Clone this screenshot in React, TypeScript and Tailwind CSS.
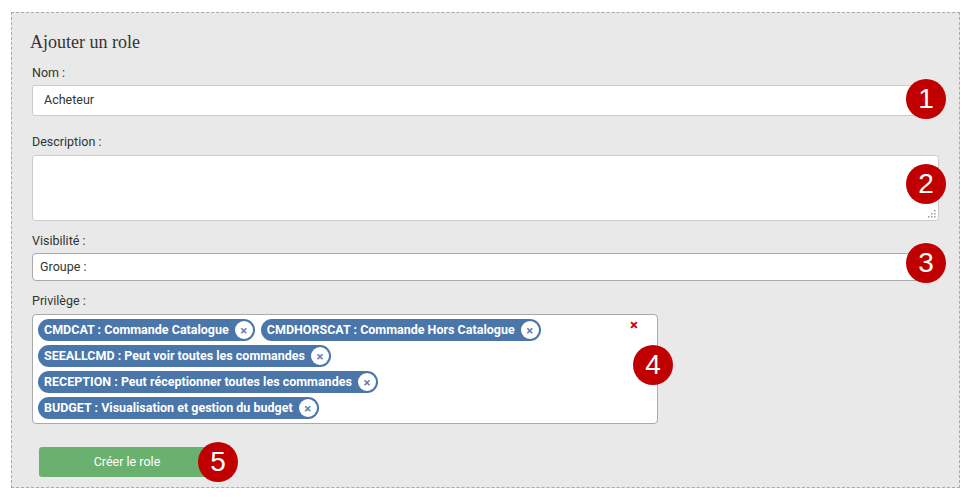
import React from 'react';

const tags = [
  ['CMDCAT : Commande Catalogue', 'CMDHORSCAT : Commande Hors Catalogue'],
  ['SEEALLCMD : Peut voir toutes les commandes'],
  ['RECEPTION : Peut réceptionner toutes les commandes'],
  ['BUDGET : Visualisation et gestion du budget'],
];

const Badge: React.FC<{ n: number; className: string }> = ({ n, className }) => (
  <div
    className={`absolute w-[40px] h-[40px] rounded-full bg-[#c00000] text-white flex items-center justify-center text-[28px] leading-none font-['Liberation_Sans',sans-serif] ${className}`}
  >
    {n}
  </div>
);

const Tag: React.FC<{ label: string }> = ({ label }) => (
  <span className="flex items-center h-[22px] rounded-full bg-[#4a76a9] pl-[6px] pr-[2px] text-white text-[12.5px] font-bold">
    {label}
    <span className="ml-[6px] w-[18px] h-[18px] rounded-full bg-white text-[#5f82ad] flex items-center justify-center text-[13px] font-bold leading-none">
      ×
    </span>
  </span>
);

const Label: React.FC<{ children: React.ReactNode; className?: string }> = ({ children, className = '' }) => (
  <div className={`h-[16px] leading-[16px] text-[12.5px] ${className}`}>{children}</div>
);

export default function App() {
  return (
    <div className="bg-white w-[974px] h-[499px] pt-[12px] pl-[11px] font-['Roboto',sans-serif] text-[#333]">
      <div className="relative w-[949px] h-[476px] border border-dashed border-[#aaa] bg-[#e9e9e9] pt-[17px] pl-[20px] pr-[20px] flex flex-col items-start">
        <h2 className="-ml-[2px] h-[24px] leading-[24px] text-[18px] text-[#333] font-['Liberation_Serif',serif]">Ajouter un role</h2>

        <Label className="mt-[11px]">Nom :</Label>
        <div className="mt-[4px] h-[31px] w-[907px] bg-white border border-[#ccc] rounded-[3px] flex items-center pl-[11px] text-[12.5px]">
          Acheteur
        </div>

        <Label className="mt-[18px]">Description :</Label>
        <div className="relative mt-[5px] h-[66px] w-[907px]">
          <textarea className="block h-full w-full bg-white border border-[#ccc] rounded-[3px] outline-none resize-none" />
          <svg className="absolute right-[3px] bottom-[3px]" width="8" height="8" viewBox="0 0 8 8">
            <g fill="#999">
              <rect x="6" y="0" width="1.5" height="1.5" />
              <rect x="3" y="3" width="1.5" height="1.5" />
              <rect x="6" y="3" width="1.5" height="1.5" />
              <rect x="0" y="6" width="1.5" height="1.5" />
              <rect x="3" y="6" width="1.5" height="1.5" />
              <rect x="6" y="6" width="1.5" height="1.5" />
            </g>
          </svg>
        </div>

        <Label className="mt-[12px]">Visibilité :</Label>
        <div className="mt-[4px] h-[28px] w-[895px] bg-white border border-[#aaa] rounded-[4px] flex items-center pl-[7px] text-[12.5px]">
          Groupe :
        </div>

        <Label className="mt-[12px]">Privilège :</Label>
        <div className="relative mt-[5px] h-[110px] w-[626px] bg-white border border-[#aaa] rounded-[4px] pt-[4px] pl-[5px] flex flex-col gap-[4px]">
          {tags.map((row, i) => (
            <div key={i} className="flex gap-[6px]">
              {row.map((t) => (
                <Tag key={t} label={t} />
              ))}
            </div>
          ))}
          <span className="absolute right-[19px] top-[3px] text-[#c00000] text-[15px] font-bold leading-none">×</span>
        </div>

        <button className="mt-[23px] ml-[7px] h-[30px] w-[170px] rounded-[3px] bg-[#6ab16f] text-white text-[12.5px] pl-[6px]">
          Créer le role
        </button>

        <Badge n={1} className="left-[894px] top-[66px]" />
        <Badge n={2} className="left-[894px] top-[151px]" />
        <Badge n={3} className="left-[894px] top-[230px]" />
        <Badge n={4} className="left-[621px] top-[332px]" />
        <Badge n={5} className="left-[186px] top-[429px]" />
      </div>
    </div>
  );
}
